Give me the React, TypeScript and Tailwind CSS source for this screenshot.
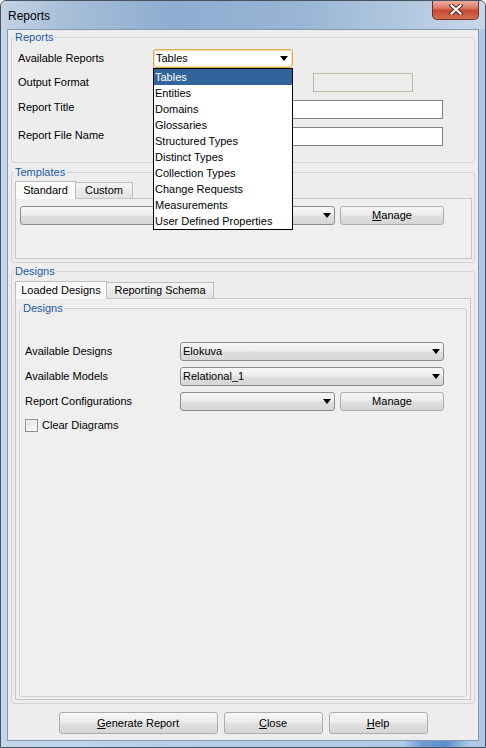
import React from "react";

const comboBg =
  "bg-[linear-gradient(#f7f7f7,#ececec_45%,#dfdfdf_55%,#d6d6d6)]";

function Arrow() {
  return (
    <svg width="8" height="5" viewBox="0 0 8 5" className="shrink-0">
      <path d="M0 0H8L4 5Z" fill="#000" />
    </svg>
  );
}

function Combo({ className, text }: { className: string; text?: string }) {
  return (
    <div
      className={`flex h-[19px] items-center justify-between rounded-[3px] border border-[#8b8b8b] pl-[2px] pr-[3px] ${comboBg} ${className}`}
    >
      <span className="text-[11px] leading-none text-black">{text ?? ""}</span>
      <Arrow />
    </div>
  );
}

function Btn({ className, children }: { className: string; children: React.ReactNode }) {
  return (
    <div
      className={`flex items-center justify-center rounded-[3px] border border-[#adadad] ${comboBg} text-[11px] leading-none text-black ${className}`}
    >
      {children}
    </div>
  );
}

function Group({
  label,
  className,
  children,
}: {
  label: string;
  className: string;
  children?: React.ReactNode;
}) {
  return (
    <div className={`rounded-[3px] border border-[#d2d2d2] ${className}`}>
      <div className="-mt-[8px] ml-[2px] flex h-[14px] w-fit items-center bg-[#ededed] px-[1px] text-[11px] leading-none text-[#1f5aa6]">
        {label}
      </div>
      {children}
    </div>
  );
}

function Field({ className }: { className: string }) {
  return <div className={`h-[19px] border border-[#828282] bg-white ${className}`} />;
}

const items = [
  "Tables",
  "Entities",
  "Domains",
  "Glossaries",
  "Structured Types",
  "Distinct Types",
  "Collection Types",
  "Change Requests",
  "Measurements",
  "User Defined Properties",
];

export default function App() {
  return (
    <div className="flex h-[748px] w-[486px] flex-col overflow-hidden rounded-t-[6px] border border-[#46525f] bg-[linear-gradient(90deg,#c3d6ea,#b5cce6_50%,#adc8e8)] font-['Liberation_Sans',Arial,sans-serif] text-[11px] text-black">
      {/* title bar */}
      <div className="flex h-[28px] shrink-0 items-start justify-between bg-[linear-gradient(90deg,#c4d3e3_0%,#a9c0d9_12%,#8eadd0_35%,#97b4d5_60%,#b3c9e0_85%,#c7d7e9_100%)]">
        <span className="pl-[7px] pt-[8px] text-[12px] leading-[14px] text-black">Reports</span>
        <div className="-mt-[1px] mr-[6px] flex h-[20px] w-[47px] items-center justify-center rounded-b-[5px] border border-t-0 border-[#6e3027] bg-[linear-gradient(#ecb6a8,#dc7a66_42%,#c8472f_55%,#d3704f)]">
          <svg width="14" height="11" viewBox="0 0 14 11">
            <path d="M2.5 1.5L11.5 9.5M11.5 1.5L2.5 9.5" stroke="#4a2a22" strokeWidth="4" strokeLinecap="square" />
            <path d="M2.5 1.5L11.5 9.5M11.5 1.5L2.5 9.5" stroke="#ffffff" strokeWidth="2.2" strokeLinecap="square" />
          </svg>
        </div>
      </div>

      {/* client area */}
      <div className="mx-[6px] h-[712px] shrink-0 border border-[#8497ac] bg-[#ededed] px-[3px]">
        {/* Reports group */}
        <Group label="Reports" className="mt-[7px] h-[126px]">
          <div className="mt-[5px] flex h-[19px] items-center pl-[6px]">
            <span className="w-[135px]">Available Reports</span>
            <div className="relative">
              <div className="flex h-[19px] w-[140px] items-center justify-between rounded-[3px] border border-[#dea64e] bg-white pl-[2px] pr-[4px] shadow-[inset_0_0_0_1px_#f8dfae]">
                <span className="leading-none">Tables</span>
                <Arrow />
              </div>
              <div className="absolute left-0 top-[19px] z-10 w-[140px] border border-black bg-white">
                {items.map((it, i) => (
                  <div
                    key={it}
                    className={`flex h-[16px] items-center pl-[1px] leading-none ${
                      i === 0 ? "bg-[#31649a] text-white" : "text-black"
                    }`}
                  >
                    {it}
                  </div>
                ))}
              </div>
            </div>
          </div>
          <div className="mt-[5px] flex h-[19px] items-center pl-[6px]">
            <span className="w-[135px]">Output Format</span>
            <div className="ml-[160px] h-[19px] w-[100px] border border-[#bcbca6] bg-[#ededed]" />
          </div>
          <div className="mt-[8px] flex h-[19px] items-center pl-[6px]">
            <span className="mb-[4px] w-[135px]">Report Title</span>
            <Field className="w-[290px]" />
          </div>
          <div className="mt-[8px] flex h-[19px] items-center pl-[6px]">
            <span className="mb-[2px] w-[135px]">Report File Name</span>
            <Field className="w-[290px]" />
          </div>
        </Group>

        {/* Templates group */}
        <Group label="Templates" className="mt-[9px] h-[91px]">
          <div className="ml-[3px] mt-[2px] flex h-[17px] items-end">
            <div className="relative z-[1] -mb-[1px] flex h-[18px] w-[61px] items-center justify-center border border-b-0 border-[#bdbdbd] bg-[#fafafa] leading-none">
              Standard
            </div>
            <div className="flex h-[16px] w-[57px] items-center justify-center border border-l-0 border-b-0 border-[#bdbdbd] bg-[linear-gradient(#f4f4f4,#e2e2e2)] leading-none">
              Custom
            </div>
          </div>
          <div className="ml-[3px] h-[61px] w-[457px] border border-[#c6c6c6] bg-[#efefef] pl-[4px] pt-[7px]">
            <div className="flex items-center gap-[5px]">
              <Combo className="w-[315px]" />
              <Btn className="h-[19px] w-[104px]">
                <span>
                  <span className="underline">M</span>anage
                </span>
              </Btn>
            </div>
          </div>
        </Group>

        {/* Designs group */}
        <Group label="Designs" className="mt-[8px] h-[433px]">
          <div className="ml-[3px] mt-[3px] flex h-[17px] items-end">
            <div className="relative z-[1] -mb-[1px] flex h-[18px] w-[92px] items-center justify-center border border-b-0 border-[#bdbdbd] bg-[#fafafa] leading-none">
              Loaded Designs
            </div>
            <div className="flex h-[16px] w-[107px] items-center justify-center border border-l-0 border-b-0 border-[#bdbdbd] bg-[linear-gradient(#f4f4f4,#e2e2e2)] leading-none">
              Reporting Schema
            </div>
          </div>
          <div className="ml-[3px] h-[402px] w-[456px] border border-[#c6c6c6] bg-[#efefef] pl-[3px] pt-[9px]">
            <Group label="Designs" className="h-[389px] w-[448px]">
              <div className="mt-[27px] flex h-[19px] items-center pl-[5px]">
                <span className="w-[155px]">Available Designs</span>
                <Combo className="w-[264px]" text="Elokuva" />
              </div>
              <div className="mt-[6px] flex h-[19px] items-center pl-[5px]">
                <span className="w-[155px]">Available Models</span>
                <Combo className="w-[264px]" text="Relational_1" />
              </div>
              <div className="mt-[6px] flex h-[19px] items-center pl-[5px]">
                <span className="w-[155px]">Report Configurations</span>
                <Combo className="w-[155px]" />
                <Btn className="ml-[5px] h-[19px] w-[104px]">Manage</Btn>
              </div>
              <div className="mt-[8px] flex h-[13px] items-center gap-[4px] pl-[5px]">
                <div className="h-[13px] w-[13px] border border-[#8e8f8f] bg-[linear-gradient(135deg,#e0e0e0,#fcfcfc)] shadow-[inset_0_0_0_1px_#f4f4f4]" />
                <span className="leading-none">Clear Diagrams</span>
              </div>
            </Group>
          </div>
        </Group>

        {/* bottom buttons */}
        <div className="mt-[8px] flex justify-center gap-[6px]">
          <Btn className="h-[22px] w-[159px]">
            <span>
              <span className="underline">G</span>enerate Report
            </span>
          </Btn>
          <Btn className="h-[22px] w-[99px]">
            <span>
              <span className="underline">C</span>lose
            </span>
          </Btn>
          <Btn className="h-[22px] w-[99px]">
            <span>
              <span className="underline">H</span>elp
            </span>
          </Btn>
        </div>
      </div>

      {/* bottom frame */}
      <div className="mx-[6px] h-[6px] bg-[linear-gradient(90deg,transparent_0%,transparent_84%,#6d9bd3_88%,#5b8dcc_93%,transparent_98%)]" />
    </div>
  );
}
